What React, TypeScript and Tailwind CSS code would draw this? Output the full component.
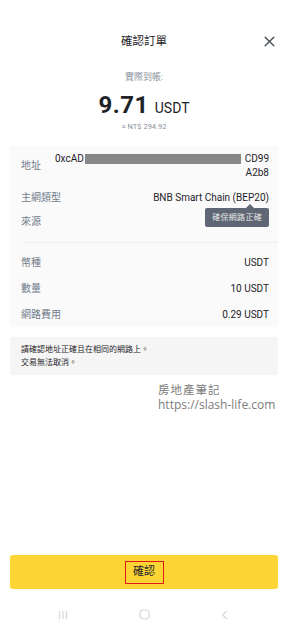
import React from "react";

export default function App() {
  const font = "font-['Roboto','Noto_Sans_CJK_TC',sans-serif]";
  return (
    <div className={`w-[288px] h-[640px] bg-white flex flex-col ${font} text-[#1e2329]`}>
      {/* header */}
      <div className="relative pt-[33px] flex justify-center">
        <div className="text-[11.5px] leading-[16px]">確認訂單</div>
        <svg className="absolute right-[13px] top-[36px]" width="11" height="11" viewBox="0 0 11 11">
          <path d="M1.2 1.2 L9.8 9.8 M9.8 1.2 L1.2 9.8" stroke="#474d57" strokeWidth="1.4" strokeLinecap="round" />
        </svg>
      </div>
      <div className="mt-[22px] text-center text-[9px] leading-[12px] text-[#8a919b]">實際到帳:</div>
      <div className="mt-[8px] flex justify-center items-baseline gap-[6px] h-[28px]">
        <span className="text-[24px] leading-[28px] font-bold tracking-[0.5px]">9.71</span>
        <span className="text-[14px] leading-[28px]">USDT</span>
      </div>
      <div className="mt-[2px] text-center text-[7.5px] leading-[12px] text-[#8a919b]">≈ NT$ 294.92</div>

      {/* card */}
      <div className="mt-[13px] mx-[10px] bg-[#fafafa] pl-[11px] pr-[9px]">
        <div className="h-[39px] flex items-center justify-between">
          <div className="text-[10px] text-[#707a8a]">地址</div>
          <div className="flex-1 ml-[14px] text-[10px] leading-[14px]">
            <div className="flex items-center">
              <span>0xcAD</span>
              <span className="inline-block w-[156px] h-[10px] bg-[#888888] ml-[1px]"></span>
              <span className="ml-auto">CD99</span>
            </div>
            <div className="text-right">A2b8</div>
          </div>
        </div>
        <div className="relative h-[24px] flex items-center justify-between">
          <div className="text-[10px] text-[#707a8a]">主網類型</div>
          <div className="text-[10px]">BNB Smart Chain (BEP20)</div>
          <div className="absolute right-0 top-[23px] z-10">
            <div className="relative bg-[#5f6774] rounded-[2px] px-[7px] h-[19px] flex items-center text-[8px] text-[#e8e8e8] tracking-[0.3px]">
              確保網路正確
              <div className="absolute -top-[4px] right-[15px] w-0 h-0 border-l-[4px] border-r-[4px] border-b-[4px] border-l-transparent border-r-transparent border-b-[#5f6774]"></div>
            </div>
          </div>
        </div>
        <div className="h-[24px] flex items-center">
          <div className="text-[10px] text-[#707a8a]">來源</div>
        </div>
        <div className="mt-[9px] h-px bg-[#eeeeee] ml-[2px] -mr-[9px]"></div>
        <div className="mt-[6px] h-[26px] flex items-center justify-between">
          <div className="text-[10px] text-[#707a8a]">幣種</div>
          <div className="text-[10px]">USDT</div>
        </div>
        <div className="h-[26px] flex items-center justify-between">
          <div className="text-[10px] text-[#707a8a]">數量</div>
          <div className="text-[10px]">10 USDT</div>
        </div>
        <div className="h-[26px] flex items-center justify-between">
          <div className="text-[10px] text-[#707a8a]">網路費用</div>
          <div className="text-[10px]">0.29 USDT</div>
        </div>
      </div>

      {/* warning */}
      <div className="mt-[10px] mx-[10px] bg-[#f5f5f5] rounded-[3px] px-[11px] py-[6px] text-[8px] leading-[13px] text-[#1e2329]">
        <div>請確認地址正確且在相同的網路上。</div>
        <div>交易無法取消。</div>
      </div>

      {/* watermark */}
      <div className="mt-[8px] pl-[158px] flex flex-col gap-[1px] text-[#7d7d7d] font-['Open_Sans','Noto_Sans_CJK_TC',sans-serif]">
        <div className="text-[11.5px] leading-[14px] tracking-[1px]">房地產筆記</div>
        <div className="text-[12px] leading-[14px]">https://slash-life.com</div>
      </div>

      <div className="flex-1"></div>

      {/* button */}
      <div className="mx-[10px] h-[34px] bg-[#fcd535] rounded-[3px] flex items-center justify-center">
        <div className="border border-[#e01818] w-[39px] h-[23px] flex items-center justify-center text-[11px] text-[#1e2329]">確認</div>
      </div>

      {/* nav */}
      <div className="h-[51px] flex items-center justify-between pl-[58px] pr-[60px]">
        <svg width="10" height="10" viewBox="0 0 10 10">
          <path d="M1.5 1 V9 M5 1 V9 M8.5 1 V9" stroke="#d8d8d8" strokeWidth="1.2" />
        </svg>
        <svg width="11" height="11" viewBox="0 0 11 11">
          <rect x="1" y="1" width="9" height="9" rx="3.5" fill="none" stroke="#d8d8d8" strokeWidth="1.2" />
        </svg>
        <svg width="7" height="10" viewBox="0 0 7 10">
          <path d="M6 1 L1.5 5 L6 9" fill="none" stroke="#d8d8d8" strokeWidth="1.2" />
        </svg>
      </div>
    </div>
  );
}
